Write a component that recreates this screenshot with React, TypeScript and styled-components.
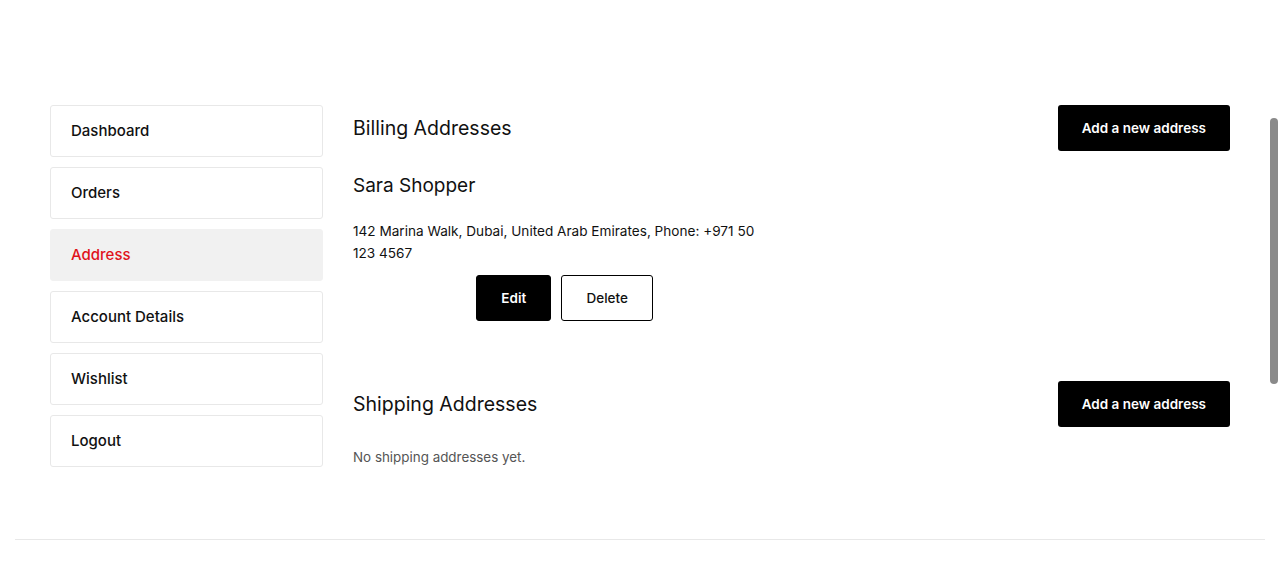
import React from "react";
import styled, { createGlobalStyle } from "styled-components";

const Global = createGlobalStyle`
  html, body { margin: 0; padding: 0; background: #fff; }
  body { font-family: Inter, "Noto Sans", sans-serif; color: #111; }
  * { box-sizing: border-box; }
`;

const Page = styled.div`
  padding: 105px 50px 0 50px;
  display: flex;
  gap: 30px;
  align-items: flex-start;
`;

const Sidebar = styled.nav`
  width: 273px;
  flex: none;
  display: flex;
  flex-direction: column;
  gap: 10px;
`;

const NavItem = styled.div<{ $active?: boolean }>`
  height: 52px;
  display: flex;
  align-items: center;
  padding: 0 0 2px 20px;
  border: 1px solid ${(p) => (p.$active ? "#f1f1f1" : "#e8e8e8")};
  border-radius: 3px;
  background: ${(p) => (p.$active ? "#f1f1f1" : "#fff")};
  color: ${(p) => (p.$active ? "#e0121b" : "#111")};
  font-size: 15px;
  font-weight: 500;
`;

const Content = styled.main`
  flex: 1;
  display: flex;
  flex-direction: column;
`;

const Section = styled.section<{ $gapTop?: number }>`
  margin-top: ${(p) => p.$gapTop ?? 0}px;
`;

const SectionHeader = styled.div`
  display: flex;
  justify-content: space-between;
  align-items: center;
  height: 46px;
`;

const Title = styled.h2`
  margin: 0;
  font-size: 19.5px;
  font-weight: 400;
  color: #111;
`;

const PrimaryButton = styled.button`
  height: 46px;
  padding: 0 24px;
  background: #000;
  color: #fff;
  border: none;
  border-radius: 3px;
  font-family: inherit;
  font-size: 13.5px;
  font-weight: 600;
`;

const Grid = styled.div`
  display: grid;
  grid-template-columns: 1fr 1fr;
  gap: 30px;
  margin-top: 24px;
`;

const Card = styled.div`
  display: flex;
  flex-direction: column;
`;

const Name = styled.div`
  font-size: 19px;
  line-height: 22px;
  font-weight: 400;
`;

const AddressText = styled.p`
  margin: 23px 0 0;
  font-size: 13.6px;
  line-height: 22px;
  color: #111;
`;

const Actions = styled.div`
  display: flex;
  justify-content: center;
  gap: 10px;
  margin-top: 11px;
`;

const ActionButton = styled.button<{ $variant: "solid" | "outline"; $w: number }>`
  width: ${(p) => p.$w}px;
  height: 46px;
  border-radius: 3px;
  font-family: inherit;
  font-size: 13.5px;
  font-weight: ${(p) => (p.$variant === "solid" ? 600 : 500)};
  background: ${(p) => (p.$variant === "solid" ? "#000" : "#fff")};
  color: ${(p) => (p.$variant === "solid" ? "#fff" : "#111")};
  border: 1px solid #000;
`;

const Empty = styled.p`
  margin: 19px 0 0;
  font-size: 13.4px;
  line-height: 22px;
  color: #555;
`;

const Footer = styled.footer`
  margin: 71px 15px 0;
  border-top: 1px solid #e8e8e8;
  height: 40px;
`;

const ScrollThumb = styled.div`
  position: fixed;
  right: 2px;
  top: 118px;
  width: 8px;
  height: 266px;
  border-radius: 4px;
  background: #8a8a8a;
`;

const nav = ["Dashboard", "Orders", "Address", "Account Details", "Wishlist", "Logout"];

export default function App() {
  return (
    <>
      <Global />
      <Page>
        <Sidebar>
          {nav.map((n) => (
            <NavItem key={n} $active={n === "Address"}>
              {n}
            </NavItem>
          ))}
        </Sidebar>
        <Content>
          <Section>
            <SectionHeader>
              <Title>Billing Addresses</Title>
              <PrimaryButton>Add a new address</PrimaryButton>
            </SectionHeader>
            <Grid>
              <Card>
                <Name>Sara Shopper</Name>
                <AddressText>
                  142 Marina Walk, Dubai, United Arab Emirates, Phone: +971 50 123 4567
                </AddressText>
                <Actions>
                  <ActionButton $variant="solid" $w={75}>Edit</ActionButton>
                  <ActionButton $variant="outline" $w={92}>Delete</ActionButton>
                </Actions>
              </Card>
            </Grid>
          </Section>
          <Section $gapTop={60}>
            <SectionHeader>
              <Title>Shipping Addresses</Title>
              <PrimaryButton>Add a new address</PrimaryButton>
            </SectionHeader>
            <Empty>No shipping addresses yet.</Empty>
          </Section>
        </Content>
      </Page>
      <Footer />
      <ScrollThumb />
    </>
  );
}
